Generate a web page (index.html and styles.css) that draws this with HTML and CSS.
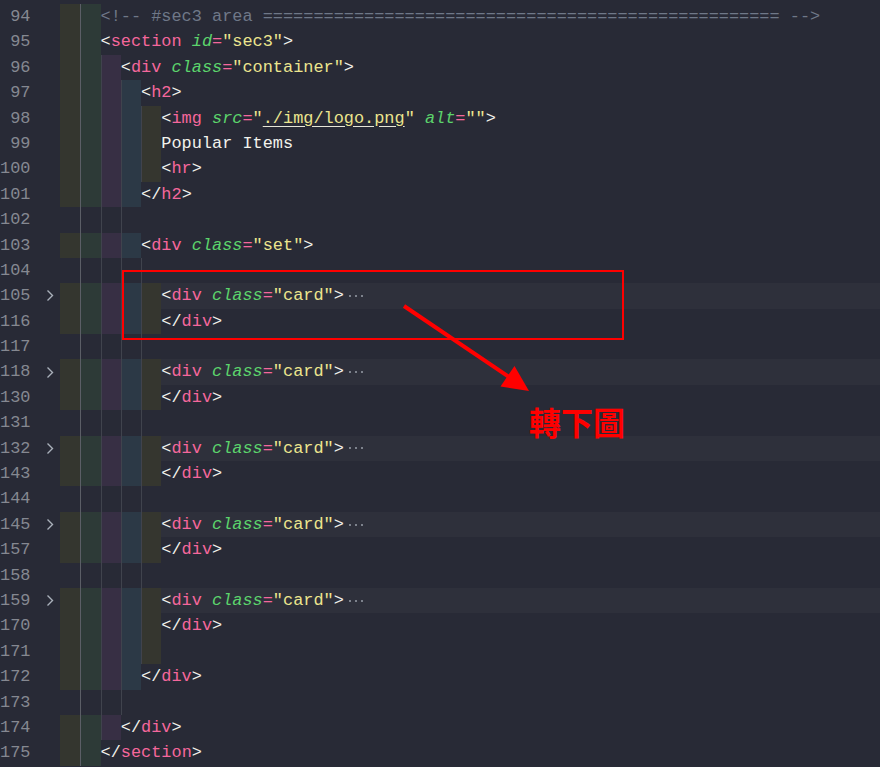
FILE: index.html
```html
<!DOCTYPE html>
<html>
<head>
    <link rel="stylesheet" href="styles.css">
</head>
<body>
    <div class="editor">
        <div class="line"><span class="num">94</span><span class="fold"></span><span class="code"><i class="ind a"></i><i class="ind b"></i><span class="src cm">&lt;!-- #sec3 area =================================================== --&gt;</span></span></div>
        <div class="line"><span class="num">95</span><span class="fold"></span><span class="code"><i class="ind a"></i><i class="ind b"></i><span class="src"><b class="p">&lt;</b><b class="tg">section</b> <b class="at">id</b><b class="tg">=</b><b class="st">"sec3"</b><b class="p">&gt;</b></span></span></div>
        <div class="line"><span class="num">96</span><span class="fold"></span><span class="code"><i class="ind a"></i><i class="ind b"></i><i class="ind c"></i><span class="src"><b class="p">&lt;</b><b class="tg">div</b> <b class="at">class</b><b class="tg">=</b><b class="st">"container"</b><b class="p">&gt;</b></span></span></div>
        <div class="line"><span class="num">97</span><span class="fold"></span><span class="code"><i class="ind a"></i><i class="ind b"></i><i class="ind c"></i><i class="ind d"></i><span class="src"><b class="p">&lt;</b><b class="tg">h2</b><b class="p">&gt;</b></span></span></div>
        <div class="line"><span class="num">98</span><span class="fold"></span><span class="code"><i class="ind a"></i><i class="ind b"></i><i class="ind c"></i><i class="ind d"></i><i class="ind e"></i><span class="src"><b class="p">&lt;</b><b class="tg">img</b> <b class="at">src</b><b class="tg">=</b><b class="st">"<u>./img/logo.png</u>"</b> <b class="at">alt</b><b class="tg">=</b><b class="st">""</b><b class="p">&gt;</b></span></span></div>
        <div class="line"><span class="num">99</span><span class="fold"></span><span class="code"><i class="ind a"></i><i class="ind b"></i><i class="ind c"></i><i class="ind d"></i><i class="ind e"></i><span class="src">Popular Items</span></span></div>
        <div class="line"><span class="num">100</span><span class="fold"></span><span class="code"><i class="ind a"></i><i class="ind b"></i><i class="ind c"></i><i class="ind d"></i><i class="ind e"></i><span class="src"><b class="p">&lt;</b><b class="tg">hr</b><b class="p">&gt;</b></span></span></div>
        <div class="line"><span class="num">101</span><span class="fold"></span><span class="code"><i class="ind a"></i><i class="ind b"></i><i class="ind c"></i><i class="ind d"></i><span class="src"><b class="p">&lt;/</b><b class="tg">h2</b><b class="p">&gt;</b></span></span></div>
        <div class="line blank"><span class="num">102</span><span class="fold"></span><span class="code"><i class="ind a"></i><i class="ind b"></i><i class="ind c"></i><i class="ind d"></i></span></div>
        <div class="line"><span class="num">103</span><span class="fold"></span><span class="code"><i class="ind a"></i><i class="ind b"></i><i class="ind c"></i><i class="ind d"></i><span class="src"><b class="p">&lt;</b><b class="tg">div</b> <b class="at">class</b><b class="tg">=</b><b class="st">"set"</b><b class="p">&gt;</b></span></span></div>
        <div class="line blank"><span class="num">104</span><span class="fold"></span><span class="code"><i class="ind a"></i><i class="ind b"></i><i class="ind c"></i><i class="ind d"></i><i class="ind e"></i></span></div>
        <div class="line folded"><span class="num">105</span><span class="fold"><svg width="8" height="13" viewBox="0 0 8 13"><polyline points="1.5,1.5 6.5,6.5 1.5,11.5" /></svg></span><span class="code"><i class="ind a"></i><i class="ind b"></i><i class="ind c"></i><i class="ind d"></i><i class="ind e"></i><span class="src"><b class="p">&lt;</b><b class="tg">div</b> <b class="at">class</b><b class="tg">=</b><b class="st">"card"</b><b class="p">&gt;</b></span><span class="more"><i></i><i></i><i></i></span></span></div>
        <div class="line"><span class="num">116</span><span class="fold"></span><span class="code"><i class="ind a"></i><i class="ind b"></i><i class="ind c"></i><i class="ind d"></i><i class="ind e"></i><span class="src"><b class="p">&lt;/</b><b class="tg">div</b><b class="p">&gt;</b></span></span></div>
        <div class="line blank"><span class="num">117</span><span class="fold"></span><span class="code"><i class="ind a"></i><i class="ind b"></i><i class="ind c"></i><i class="ind d"></i><i class="ind e"></i></span></div>
        <div class="line folded"><span class="num">118</span><span class="fold"><svg width="8" height="13" viewBox="0 0 8 13"><polyline points="1.5,1.5 6.5,6.5 1.5,11.5" /></svg></span><span class="code"><i class="ind a"></i><i class="ind b"></i><i class="ind c"></i><i class="ind d"></i><i class="ind e"></i><span class="src"><b class="p">&lt;</b><b class="tg">div</b> <b class="at">class</b><b class="tg">=</b><b class="st">"card"</b><b class="p">&gt;</b></span><span class="more"><i></i><i></i><i></i></span></span></div>
        <div class="line"><span class="num">130</span><span class="fold"></span><span class="code"><i class="ind a"></i><i class="ind b"></i><i class="ind c"></i><i class="ind d"></i><i class="ind e"></i><span class="src"><b class="p">&lt;/</b><b class="tg">div</b><b class="p">&gt;</b></span></span></div>
        <div class="line blank"><span class="num">131</span><span class="fold"></span><span class="code"><i class="ind a"></i><i class="ind b"></i><i class="ind c"></i><i class="ind d"></i><i class="ind e"></i></span></div>
        <div class="line folded"><span class="num">132</span><span class="fold"><svg width="8" height="13" viewBox="0 0 8 13"><polyline points="1.5,1.5 6.5,6.5 1.5,11.5" /></svg></span><span class="code"><i class="ind a"></i><i class="ind b"></i><i class="ind c"></i><i class="ind d"></i><i class="ind e"></i><span class="src"><b class="p">&lt;</b><b class="tg">div</b> <b class="at">class</b><b class="tg">=</b><b class="st">"card"</b><b class="p">&gt;</b></span><span class="more"><i></i><i></i><i></i></span></span></div>
        <div class="line"><span class="num">143</span><span class="fold"></span><span class="code"><i class="ind a"></i><i class="ind b"></i><i class="ind c"></i><i class="ind d"></i><i class="ind e"></i><span class="src"><b class="p">&lt;/</b><b class="tg">div</b><b class="p">&gt;</b></span></span></div>
        <div class="line blank"><span class="num">144</span><span class="fold"></span><span class="code"><i class="ind a"></i><i class="ind b"></i><i class="ind c"></i><i class="ind d"></i><i class="ind e"></i></span></div>
        <div class="line folded"><span class="num">145</span><span class="fold"><svg width="8" height="13" viewBox="0 0 8 13"><polyline points="1.5,1.5 6.5,6.5 1.5,11.5" /></svg></span><span class="code"><i class="ind a"></i><i class="ind b"></i><i class="ind c"></i><i class="ind d"></i><i class="ind e"></i><span class="src"><b class="p">&lt;</b><b class="tg">div</b> <b class="at">class</b><b class="tg">=</b><b class="st">"card"</b><b class="p">&gt;</b></span><span class="more"><i></i><i></i><i></i></span></span></div>
        <div class="line"><span class="num">157</span><span class="fold"></span><span class="code"><i class="ind a"></i><i class="ind b"></i><i class="ind c"></i><i class="ind d"></i><i class="ind e"></i><span class="src"><b class="p">&lt;/</b><b class="tg">div</b><b class="p">&gt;</b></span></span></div>
        <div class="line blank"><span class="num">158</span><span class="fold"></span><span class="code"><i class="ind a"></i><i class="ind b"></i><i class="ind c"></i><i class="ind d"></i><i class="ind e"></i></span></div>
        <div class="line folded"><span class="num">159</span><span class="fold"><svg width="8" height="13" viewBox="0 0 8 13"><polyline points="1.5,1.5 6.5,6.5 1.5,11.5" /></svg></span><span class="code"><i class="ind a"></i><i class="ind b"></i><i class="ind c"></i><i class="ind d"></i><i class="ind e"></i><span class="src"><b class="p">&lt;</b><b class="tg">div</b> <b class="at">class</b><b class="tg">=</b><b class="st">"card"</b><b class="p">&gt;</b></span><span class="more"><i></i><i></i><i></i></span></span></div>
        <div class="line"><span class="num">170</span><span class="fold"></span><span class="code"><i class="ind a"></i><i class="ind b"></i><i class="ind c"></i><i class="ind d"></i><i class="ind e"></i><span class="src"><b class="p">&lt;/</b><b class="tg">div</b><b class="p">&gt;</b></span></span></div>
        <div class="line"><span class="num">171</span><span class="fold"></span><span class="code"><i class="ind a"></i><i class="ind b"></i><i class="ind c"></i><i class="ind d"></i><i class="ind e"></i></span></div>
        <div class="line"><span class="num">172</span><span class="fold"></span><span class="code"><i class="ind a"></i><i class="ind b"></i><i class="ind c"></i><i class="ind d"></i><span class="src"><b class="p">&lt;/</b><b class="tg">div</b><b class="p">&gt;</b></span></span></div>
        <div class="line blank"><span class="num">173</span><span class="fold"></span><span class="code"><i class="ind a"></i><i class="ind b"></i><i class="ind c"></i><i class="ind d"></i></span></div>
        <div class="line"><span class="num">174</span><span class="fold"></span><span class="code"><i class="ind a"></i><i class="ind b"></i><i class="ind c"></i><span class="src"><b class="p">&lt;/</b><b class="tg">div</b><b class="p">&gt;</b></span></span></div>
        <div class="line"><span class="num">175</span><span class="fold"></span><span class="code"><i class="ind a"></i><i class="ind b"></i><span class="src"><b class="p">&lt;/</b><b class="tg">section</b><b class="p">&gt;</b></span></span></div>

        <!-- annotation drawn on top of the screenshot -->
        <svg class="marks" width="880" height="767" viewBox="0 0 880 767">
            <rect x="123" y="271" width="500" height="68" />
            <line x1="404" y1="306" x2="512" y2="379" />
            <polygon points="529,391 500.5,386.5 514.5,366" />
        </svg>
        <div class="note">轉下圖</div>
    </div>
</body>
</html>
```

FILE: styles.css
```css
body {
    margin: 0;
    background: #282a36;
    font-family: 'Liberation Mono', 'DejaVu Sans Mono', monospace;
    font-size: 16.9px;
    color: #f2f2ec;
    overflow: hidden;
}

.editor {
    position: relative;
    width: 880px;
    height: 767px;
    padding-top: 4px;
    box-sizing: border-box;
}

.line {
    display: flex;
    height: 25.4px;
    line-height: 25.4px;
    white-space: pre;
}

.num {
    flex: none;
    width: 30.5px;
    text-align: right;
    color: #858891;
}

.fold {
    flex: none;
    width: 29.5px;
    padding-left: 15px;
    box-sizing: border-box;
    display: flex;
    align-items: center;
}

.fold svg polyline {
    fill: none;
    stroke: #a9b0ba;
    stroke-width: 1.4;
}

.code {
    flex: 1;
    display: flex;
}

.line.folded .code {
    background: #2e303b;
}

/* indent rainbow + guides */
.ind {
    flex: none;
    width: 2ch;
    height: 100%;
}

.ind.a { background: #34362f; }
.ind.b { background: #2d3a37; box-shadow: inset 1px 0 0 #5b5e66; }
.ind.c { background: #372f44; box-shadow: inset 1px 0 0 #40434d; }
.ind.d { background: #2c3946; box-shadow: inset 1px 0 0 #40434d; }
.ind.e { background: #35362f; box-shadow: inset 1px 0 0 #40434d; }

.line.blank .ind {
    background: transparent;
}

.src b {
    font-weight: normal;
}

.p { color: #f2f2ec; }
.tg { color: #f5679c; }
.at { color: #5cd46c; font-style: italic; }
.st { color: #ece58e; }
.st u { text-decoration-color: #e6e6d8; text-underline-offset: 3px; }
.cm { color: #6f7888; }

.more {
    display: flex;
    align-items: center;
    gap: 4px;
    padding-left: 5px;
}

.more i {
    width: 2px;
    height: 2px;
    background: #7d828c;
}

.marks {
    position: absolute;
    top: 0;
    left: 0;
    pointer-events: none;
}

.marks rect {
    fill: none;
    stroke: #ff0000;
    stroke-width: 2;
}

.marks line {
    stroke: #ff0000;
    stroke-width: 4;
}

.marks polygon {
    fill: #ff0000;
}

.note {
    position: absolute;
    left: 529px;
    top: 404px;
    font-family: 'Noto Sans CJK TC', 'Noto Sans CJK SC', sans-serif;
    font-size: 32px;
    line-height: 34px;
    font-weight: 700;
    color: #ff0000;
}
```
